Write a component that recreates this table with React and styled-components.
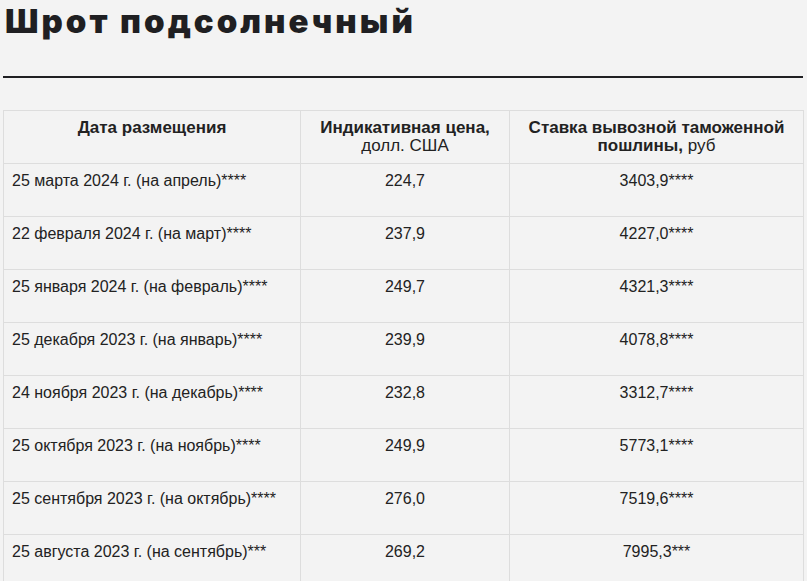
import React from "react";
import styled, { createGlobalStyle } from "styled-components";

const GlobalStyle = createGlobalStyle`
  html, body {
    margin: 0;
    padding: 0;
    background: #f3f3f3;
  }
  body {
    font-family: "Liberation Sans", Arial, sans-serif;
    color: #222;
  }
`;

const Page = styled.div`
  padding: 0 4px 0 3px;
`;

const Title = styled.h1`
  margin: 0;
  padding: 0 0 0 2px;
  font-family: Inter, "Noto Sans", sans-serif;
  font-weight: 900;
  font-size: 33px;
  line-height: 42px;
  color: #1f1f22;
  letter-spacing: 3px;
`;

const Rule = styled.div`
  height: 2px;
  margin-top: 34px;
  background: #1f1f22;
`;

const Table = styled.table`
  width: 800px;
  margin-top: 32px;
  border-collapse: collapse;
  table-layout: fixed;
  font-size: 16px;
  line-height: 18px;
`;

const Cell = styled.td`
  border: 1px solid #dddddd;
  padding: 8px 8px;
  height: 36px;
  vertical-align: top;
  text-align: ${(p) => (p.$left ? "left" : "center")};
  color: #222;
`;

const HeadCell = styled(Cell).attrs({ as: "th" })`
  font-weight: normal;
  font-size: 17px;
`;

const B = styled.b`
  font-weight: bold;
`;

const rows = [
  ["25 марта 2024 г. (на апрель)****", "224,7", "3403,9****"],
  ["22 февраля 2024 г. (на март)****", "237,9", "4227,0****"],
  ["25 января 2024 г. (на февраль)****", "249,7", "4321,3****"],
  ["25 декабря 2023 г. (на январь)****", "239,9", "4078,8****"],
  ["24 ноября 2023 г. (на декабрь)****", "232,8", "3312,7****"],
  ["25 октября 2023 г. (на ноябрь)****", "249,9", "5773,1****"],
  ["25 сентября 2023 г. (на октябрь)****", "276,0", "7519,6****"],
  ["25 августа 2023 г. (на сентябрь)***", "269,2", "7995,3***"],
];

export default function App() {
  return (
    <Page>
      <GlobalStyle />
      <Title>Шрот подсолнечный</Title>
      <Rule />
      <Table>
        <colgroup>
          <col style={{ width: 297 }} />
          <col style={{ width: 209 }} />
          <col style={{ width: 294 }} />
        </colgroup>
        <thead>
          <tr>
            <HeadCell>
              <B>Дата размещения</B>
            </HeadCell>
            <HeadCell>
              <B>Индикативная цена,</B>
              <br />
              долл. США
            </HeadCell>
            <HeadCell>
              <B>Ставка вывозной таможенной</B>
              <br />
              <B>пошлины,</B> руб
            </HeadCell>
          </tr>
        </thead>
        <tbody>
          {rows.map((r) => (
            <tr key={r[0]}>
              <Cell $left>{r[0]}</Cell>
              <Cell>{r[1]}</Cell>
              <Cell>{r[2]}</Cell>
            </tr>
          ))}
        </tbody>
      </Table>
    </Page>
  );
}
